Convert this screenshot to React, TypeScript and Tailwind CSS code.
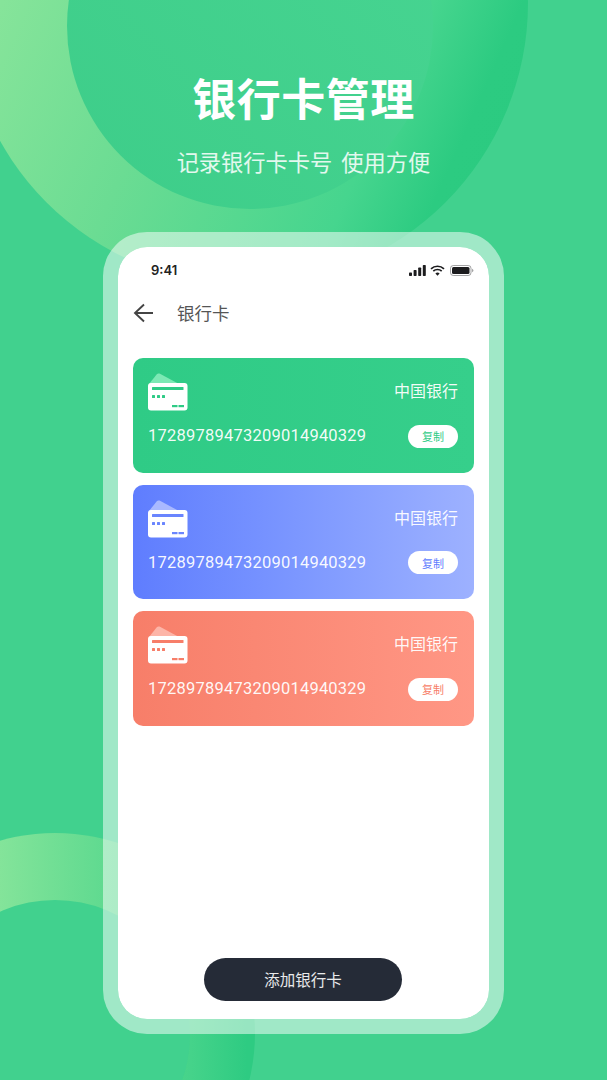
const cards = [
  {
    id: 'green',
    bg: 'bg-gradient-to-r from-[#2fcb86] to-[#36cf8b]',
    text: 'text-[#2fcb86]',
    accent: '#2fcb86',
    flap: '#7ce9b4',
  },
  {
    id: 'blue',
    bg: 'bg-gradient-to-r from-[#5f7dfe] to-[#9db1ff]',
    text: 'text-[#5f7dfe]',
    accent: '#6a85fe',
    flap: '#a9b9ff',
  },
  {
    id: 'red',
    bg: 'bg-gradient-to-r from-[#f77e69] to-[#ff9785]',
    text: 'text-[#f77e69]',
    accent: '#f77e69',
    flap: '#fdb5a8',
  },
];

function CardIcon({ accent, flap }: { accent: string; flap: string }) {
  return (
    <svg width="40" height="38" viewBox="0 0 40 38">
      <path d="M1 11 L9 1 Q10 0 11.500 0.600 L31 11 Z" fill={flap} />
      <rect x="0" y="10" width="39.500" height="27.500" rx="3" fill="#fff" />
      <rect x="4" y="14" width="31.500" height="3" rx="0.500" fill={accent} />
      <rect x="4" y="22" width="3" height="3" rx="0.500" fill={accent} />
      <rect x="9" y="22" width="3" height="3" rx="0.500" fill={accent} />
      <rect x="14" y="22" width="3" height="3" rx="0.500" fill={accent} />
      <rect x="24" y="32" width="5.500" height="2.200" fill={accent} />
      <rect x="30.500" y="32" width="5.500" height="2.200" fill={accent} />
    </svg>
  );
}

function StatusIcons() {
  return (
    <div className="flex items-center gap-[4px]">
      <svg width="17" height="11" viewBox="0 0 17 11" fill="#1c1c1e">
        <rect x="0" y="7.500" width="3" height="3.500" rx="0.700" />
        <rect x="4.600" y="5" width="3" height="6" rx="0.700" />
        <rect x="9.200" y="2.500" width="3" height="8.500" rx="0.700" />
        <rect x="13.800" y="0" width="3" height="11" rx="0.700" />
      </svg>
      <svg width="15" height="11" viewBox="0 0 15 11" fill="none" stroke="#1c1c1e" strokeWidth="1.700">
        <path d="M1 3.800 A9.500 9.500 0 0 1 14 3.800" />
        <path d="M3.300 6.200 A6 6 0 0 1 11.700 6.200" />
        <path d="M7.500 10.800 L5.400 8.500 A3 3 0 0 1 9.600 8.500 Z" fill="#1c1c1e" stroke="none" />
      </svg>
      <svg width="24" height="11" viewBox="0 0 24 11" className="ml-[1px]">
        <rect x="0.500" y="0.500" width="20.500" height="10" rx="2.800" fill="none" stroke="#1c1c1e" strokeOpacity="0.4" />
        <rect x="2" y="2" width="17.500" height="7" rx="1.500" fill="#1c1c1e" />
        <path d="M22 3.800 Q23.400 4.300 23.400 5.500 Q23.400 6.700 22 7.200 Z" fill="#1c1c1e" fillOpacity="0.4" />
      </svg>
    </div>
  );
}

export default function App() {
  return (
    <div
      className="relative h-[1080px] w-[607px] overflow-hidden bg-[#41d18e]"
      style={{ fontFamily: '"Noto Sans CJK SC", "Noto Sans", sans-serif' }}
    >
      {/* background circles */}
      <div className="absolute left-[-36px] top-[-279px] size-[564px] rounded-full bg-[linear-gradient(114deg,#86e49a_20%,#6bdc93_44%,#46d58e_73%,#2ccb81_84%,#2bca80_100%)]" />
      <div className="absolute left-[67px] top-[-157px] size-[366px] rounded-full bg-[linear-gradient(45deg,#3dcd89,#48d592)]" />
      <div className="absolute left-[-145px] top-[833px] size-[400px] rounded-full bg-[linear-gradient(90deg,#84e49a_36%,#60da90_62%,#45d38a_84%,#2ecb82_98%)]" />
      <div className="absolute left-[-80px] top-[900px] size-[270px] rounded-full bg-[#41d18e]" />

      <div className="relative flex flex-col items-center">
        <h1 className="mt-[66px] text-[44px] leading-[62px] font-bold tracking-[0.5px] text-white">银行卡管理</h1>
        <p className="mt-[17px] text-[22.250px] leading-[32px] text-white/85 [word-spacing:4px]">记录银行卡卡号 使用方便</p>

        <div className="mt-[55px] flex h-[802px] w-[401px] flex-col rounded-[44px] border-[15px] border-white/50 bg-white bg-clip-padding">
          <div className="flex h-[31px] items-end justify-between pl-[33px] pr-[15px]">
            <span className="text-[13px] leading-[16px] font-semibold text-[#222]" style={{ fontFamily: 'Inter, sans-serif' }}>
              9:41
            </span>
            <div className="pb-[2px]">
              <StatusIcons />
            </div>
          </div>

          <div className="mt-[17px] flex h-[36px] items-center pl-[15px]">
            <svg width="21" height="20" viewBox="0 0 21 20" fill="none" stroke="#444" strokeWidth="1.900">
              <path d="M20 10 H2 M11 1.500 L2 10 L11 18.500" />
            </svg>
            <span className="ml-[23px] text-[17.500px] text-[#555]">银行卡</span>
          </div>

          <div className="mt-[27px] flex flex-col gap-[12px] px-[15px]">
            {cards.map((card) => (
              <article key={card.id} className={`flex h-[114.500px] flex-col rounded-[10px] pl-[15px] pr-[16px] pt-[15px] ${card.bg}`}>
                <div className="flex justify-between">
                  <CardIcon accent={card.accent} flap={card.flap} />
                  <span className="mt-[6px] text-[16px] leading-[22px] text-white/95">中国银行</span>
                </div>
                <div className="mt-[13px] flex items-center justify-between">
                  <span className="text-[16.500px] tracking-[0.220px] text-white/95" style={{ fontFamily: 'Roboto, sans-serif' }}>
                    17289789473209014940329
                  </span>
                  <button className={`flex h-[23px] w-[50px] items-center justify-center rounded-full bg-white text-[11px] ${card.text}`}>
                    复制
                  </button>
                </div>
              </article>
            ))}
          </div>

          <button className="mb-[18px] ml-[86px] mt-auto flex h-[43px] w-[198px] items-center justify-center rounded-full bg-[#252b37] text-[15.500px] text-white/90">
            添加银行卡
          </button>
        </div>
      </div>
    </div>
  );
}
